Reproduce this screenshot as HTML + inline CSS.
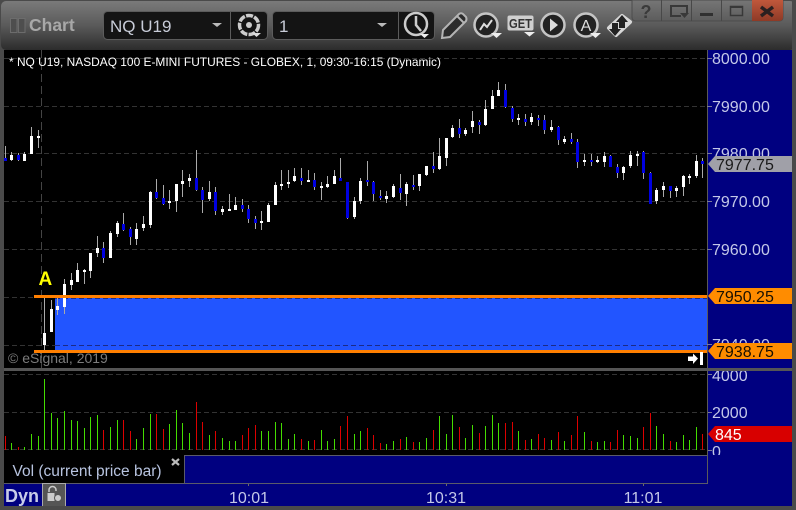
<!DOCTYPE html>
<html><head><meta charset="utf-8"><title>Chart</title>
<style>
html,body{margin:0;padding:0;background:#444}
svg{display:block}
text{font-family:"Liberation Sans",sans-serif}
</style></head><body>
<svg width="796" height="510" viewBox="0 0 796 510" xmlns="http://www.w3.org/2000/svg">
<defs>
<linearGradient id="tb" x1="0" y1="0" x2="0" y2="1"><stop offset="0" stop-color="#7a7a7a"/><stop offset=".5" stop-color="#5a5a5a"/><stop offset="1" stop-color="#2c2c2c"/></linearGradient>
<linearGradient id="btn" x1="0" y1="0" x2="0" y2="1"><stop offset="0" stop-color="#767676"/><stop offset="1" stop-color="#5c5c5c"/></linearGradient>
<linearGradient id="cl" x1="0" y1="0" x2="0" y2="1"><stop offset="0" stop-color="#c0583c"/><stop offset="1" stop-color="#8e3a26"/></linearGradient>
</defs>
<rect width="796" height="510" fill="#4a4a4a"/>
<rect x="1" y="1" width="794" height="49" rx="5" fill="url(#tb)"/>
<!-- title -->
<rect x="10.5" y="18.5" width="6.500" height="14" fill="#4e4e4e" stroke="#6c6c6c"/><rect x="18.5" y="18.5" width="6.500" height="14" fill="#4e4e4e" stroke="#6c6c6c"/>
<text x="29" y="31" font-size="17.5" font-weight="bold" fill="#a8a8a8">Chart</text>
<!-- combo 1 -->
<rect x="103.5" y="11.5" width="164" height="28" rx="4" fill="#141414" stroke="#5c5c5c"/>
<path d="M230.5 11V39" stroke="#5c5c5c"/>
<text x="110" y="32" font-size="17" fill="#c8ccd8">NQ U19</text>
<path d="M212 23h10l-5 4z" fill="#bbb"/>
<circle cx="249" cy="25" r="9.500" fill="none" stroke="#ccc" stroke-width="3.500" stroke-dasharray="7 1.300"/><circle cx="249" cy="25" r="3" fill="#ccc"/>
<path d="M252 33h9l-4.500 4z" fill="#ddd"/>
<!-- combo 2 -->
<rect x="272.500" y="11.500" width="162" height="28" rx="4" fill="#141414" stroke="#5c5c5c"/>
<path d="M398.500 11V39" stroke="#5c5c5c"/>
<text x="279" y="32" font-size="17" fill="#c8ccd8">1</text>
<path d="M377 23h10l-5 4z" fill="#bbb"/>
<circle cx="416" cy="24" r="11" fill="none" stroke="#ccc" stroke-width="2.500"/><path d="M416 16v9l5 6" fill="none" stroke="#ccc" stroke-width="2.500"/>
<path d="M420 34h9l-4.500 4z" fill="#eee"/>
<!-- tools -->
<path d="M443 30l16-16q2-1.500 4 0l3 3q1 2 0 4l-16 16-8 1z" fill="#2c2c2c" stroke="#b4b4b4" stroke-width="2"/><path d="M457 16l7 7" stroke="#b4b4b4" stroke-width="2"/>
<circle cx="486" cy="25" r="11.500" fill="#222" stroke="#c4c4c4" stroke-width="2.500"/><path d="M480 30l4-6 3 3 5-7" fill="none" stroke="#ddd" stroke-width="2"/>
<path d="M491 33h11l-5.500 5z" fill="#eee"/>
<rect x="507.500" y="15.500" width="26" height="15" rx="2" fill="#cfcfcf"/>
<text x="509" y="28" font-size="13" font-weight="bold" fill="#333" textLength="23" lengthAdjust="spacingAndGlyphs">GET</text>
<path d="M524 32h11l-5.500 4.500z" fill="#eee"/>
<circle cx="553" cy="25" r="11.500" fill="#222" stroke="#c4c4c4" stroke-width="2.500"/><path d="M550 18.500l8 6.500-8 6.500z" fill="#ddd"/>
<circle cx="586" cy="25" r="11.500" fill="#222" stroke="#c4c4c4" stroke-width="2.500"/>
<text x="586" y="31" text-anchor="middle" font-size="16" fill="#ddd">A</text>
<path d="M590 33h11l-5.500 5z" fill="#eee"/>
<path d="M609 28l13-12 8 6-14 13z" fill="#d8d8d8" stroke="#d8d8d8" stroke-width="4" stroke-linejoin="round"/>
<path d="M622 15l6 7h-3v6h-6v-6h-3z" fill="#222"/><path d="M615 36l-6-7h3v-6h6v6h3z" fill="#222"/>
<!-- window buttons -->
<path d="M632 0h151v17q0 4-4 4h-143q-4 0-4-4z" fill="url(#btn)" stroke="#4c4c4c"/>
<path d="M661.500 0v21M691.500 0v21M721.500 0v21" stroke="#484848"/>
<path d="M752 0h31v17q0 4-4 4h-27z" fill="url(#cl)"/>
<text x="646" y="18" text-anchor="middle" font-size="18" font-weight="bold" fill="#3a3a3a">?</text>
<path d="M681 16h-10V6h16v7" fill="none" stroke="#383838" stroke-width="2"/><path d="M680 13h9l-4.500 5z" fill="#383838"/>
<rect x="700" y="13" width="13" height="3" fill="#303030"/>
<rect x="730.500" y="6.500" width="12" height="9" fill="none" stroke="#383838" stroke-width="1.500"/><rect x="730" y="6" width="13" height="2" fill="#383838"/>
<path d="M761 7l12 9M773 7l-12 9" stroke="#2a2020" stroke-width="3.500"/>
<!-- chart bg -->
<rect x="4" y="50" width="703" height="318" fill="#000"/>
<rect x="707" y="50" width="85" height="456" fill="#000080"/>
<rect x="707" y="50" width="1" height="433" fill="#5a5a5a"/>
<!-- zone -->
<rect x="55" y="298" width="652" height="52" fill="#2255ff"/>
<!-- grid -->
<path d="M4 58.500H707M4 106.500H707M4 153.500H707M4 201.500H707M4 249.500H707M4 297.500H55M4 345.500H55" stroke="#333" stroke-dasharray="5 3" fill="none"/>
<path d="M55 298.500H707M55 345.500H707" stroke="#1a2a88" stroke-dasharray="5 3" fill="none"/>
<path d="M41.500 50V368" stroke="#444" stroke-dasharray="8 4" fill="none"/>
<path d="M707 58.500h5M707 106.500h5M707 153.500h5M707 201.500h5M707 249.500h5M707 344.500h5M707 374.500h5M707 412.500h5M707 450.500h5" stroke="#7a7a9a"/>
<!-- wicks -->
<path stroke="#aaa" fill="none" d="M5.500 146V160M11.500 152V161M18.500 153V161M24.500 152V161M31.500 127V154M38.500 130V148M44.500 296V350M51.500 300V332M57.500 297V315M64.500 279V314M71.500 273V290M77.500 263V282M84.500 269V284M90.500 253V278M97.500 236V257M103.500 242V263M110.500 231V258M117.500 221V237M123.500 213V231M130.500 227V245M136.500 223V245M143.500 216V231M150.500 191V228M156.500 179V199M163.500 185V205M169.500 190V209M176.500 184V212M182.500 170V197M189.500 174V187M196.500 150V191M202.500 187V213M209.500 181V201M215.500 187V215M222.500 206V215M229.500 194V211M235.500 197V210M242.500 199V212M248.500 205V223M255.500 216V229M261.500 211V230M268.500 203V222M275.500 182V205M281.500 170V190M288.500 170V188M294.500 168V182M301.500 168V185M308.500 170V182M314.500 173V190M321.500 182V200M327.500 176V188M334.500 170V184M340.500 158V181M347.500 182V219M354.500 197V219M360.500 178V204M367.500 161V186M373.500 181V201M380.500 190V200M386.500 191V203M393.500 184V198M400.500 174V200M406.500 182V206M413.500 175V190M419.500 174V191M426.500 166V176M433.500 152V173M439.500 138V170M446.500 138V166M452.500 125V138M459.500 119V138M465.500 128V136M472.500 111V133M479.500 120V134M485.500 100V126M492.500 90V109M498.500 82V96M505.500 84V108M512.500 106V122M518.500 114V125M525.500 114V126M531.500 113V125M538.500 115V126M544.500 115V134M551.500 120V132M558.500 126V145M564.500 136V144M571.500 133V144M577.500 139V168M584.500 154V166M591.500 154V166M597.500 156V163M604.500 152V167M610.500 155V167M617.500 164V178M623.500 166V180M630.500 151V168M637.500 151V166M643.500 151V179M650.500 172V204M656.500 188V204M663.500 182V197M670.500 186V198M676.500 186V197M683.500 175V196M689.500 174V184M696.500 155V178M702.500 158V178"/>
<!-- white bodies -->
<path stroke="#fff" stroke-width="3" fill="none" d="M11.500 155V160M24.500 154V161M31.500 136V154M38.500 136V138M44.500 333V345M51.500 309V332M57.500 306V310M64.500 284V307M71.500 280V285M77.500 270V282M84.500 270V272M90.500 253V271M97.500 248V253M110.500 233V258M117.500 223V234M136.500 229V239M143.500 224V228M150.500 192V225M169.500 201V203M176.500 184V201M182.500 181V184M189.500 178V181M209.500 192V199M222.500 209V212M229.500 209V211M235.500 205V210M261.500 221V223M268.500 205V222M275.500 185V205M281.500 184V186M288.500 182V184M294.500 176V181M308.500 180V182M321.500 186V188M327.500 184V187M334.500 176V184M354.500 201V217M360.500 181V201M386.500 196V199M393.500 186V197M406.500 184V194M419.500 174V186M426.500 166V175M439.500 156V169M446.500 138V158M452.500 128V137M465.500 130V134M472.500 121V127M485.500 109V125M492.500 96V109M498.500 90V96M518.500 118V120M531.500 117V122M551.500 127V130M564.500 139V142M584.500 160V162M597.500 160V162M604.500 156V162M623.500 167V173M630.500 155V166M637.500 154V156M656.500 190V201M663.500 186V190M676.500 188V191M683.500 176V187M689.500 176V178M696.500 161V176"/>
<!-- blue bodies -->
<path stroke="#0000e0" stroke-width="3" fill="none" d="M5.500 158V161M18.500 155V160M103.500 248V258M123.500 224V230M130.500 229V237M156.500 192V198M163.500 198V204M196.500 178V190M202.500 190V200M215.500 192V211M242.500 205V209M248.500 209V219M255.500 219V223M301.500 178V181M314.500 180V187M340.500 178V181M347.500 182V218M367.500 180V182M373.500 182V194M380.500 196V198M400.500 188V193M413.500 185V187M433.500 166V169M459.500 128V134M479.500 122V125M505.500 90V107M512.500 108V119M525.500 119V122M538.500 118V120M544.500 120V130M558.500 127V140M571.500 139V142M577.500 142V162M591.500 160V162M610.500 156V167M617.500 167V173M643.500 152V173M650.500 173V204M670.500 186V191M702.500 161V164"/>
<!-- orange lines -->
<rect x="34" y="295" width="673" height="3" fill="#ff7f00"/>
<rect x="34" y="350" width="673" height="3" fill="#ff7f00"/>
<text x="38.500" y="285" font-size="19" font-weight="bold" fill="#ffff00">A</text>
<text x="9" y="66" font-size="12" fill="#fff" textLength="432" lengthAdjust="spacingAndGlyphs">* NQ U19, NASDAQ 100 E-MINI FUTURES - GLOBEX, 1, 09:30-16:15 (Dynamic)</text>
<text x="8" y="363" font-size="14" fill="#7c7c7c">© eSignal, 2019</text>
<path d="M698 358.500l-5-5v3h-5v4.500h5v3z" fill="#fff"/><rect x="700" y="352" width="3" height="13" fill="#fff"/>
<!-- price labels -->
<g font-size="16" fill="#c4c8e8">
<text x="712" y="64">8000.00</text><text x="712" y="112">7990.00</text><text x="712" y="159">7980.00</text><text x="712" y="207">7970.00</text><text x="712" y="255">7960.00</text><text x="712" y="350">7940.00</text>
</g>
<path d="M708 164l7-8h77v16h-77z" fill="#a0a0a8"/><text x="716" y="170" font-size="16" fill="#1a1a1a">7977.75</text>
<path d="M708 296l7-8h77v16h-77z" fill="#ff8c00"/><text x="716" y="302" font-size="16" fill="#1a1000">7950.25</text>
<path d="M708 351l7-8h77v16h-77z" fill="#ff8c00"/><text x="716" y="357" font-size="16" fill="#1a1000">7938.75</text>
<!-- volume pane -->
<rect x="4" y="371" width="703" height="84" fill="#000"/>
<path d="M4 374.500H707M4 412.500H707M4 449.500H707" stroke="#333" stroke-dasharray="5 3" fill="none"/>
<path stroke="#44dd00" fill="none" d="M11.500 443V450M24.500 447V450M31.500 434V450M38.500 436V450M44.500 379V450M51.500 413V450M57.500 418V450M64.500 411V450M71.500 420V450M77.500 421V450M84.500 428V450M90.500 417V450M97.500 415V450M110.500 427V450M117.500 420V450M136.500 439V450M143.500 428V450M150.500 414V450M169.500 424V450M176.500 410V450M182.500 423V450M189.500 433V450M209.500 435V450M222.500 438V450M229.500 441V450M235.500 441V450M261.500 431V450M268.500 431V450M275.500 422V450M281.500 423V450M288.500 439V450M294.500 434V450M308.500 441V450M321.500 430V450M327.500 441V450M334.500 439V450M354.500 434V450M360.500 431V450M386.500 444V450M393.500 441V450M406.500 437V450M419.500 442V450M426.500 438V450M439.500 416V450M446.500 434V450M452.500 415V450M465.500 438V450M472.500 425V450M485.500 426V450M492.500 415V450M498.500 423V450M518.500 431V450M531.500 439V450M551.500 440V450M564.500 441V450M584.500 432V450M597.500 442V450M604.500 441V450M623.500 435V450M630.500 436V450M637.500 438V450M656.500 426V450M663.500 434V450M676.500 442V450M683.500 435V450M689.500 440V450M696.500 427V450"/>
<path stroke="#dd0000" fill="none" d="M5.500 436V450M18.500 447V450M103.500 430V450M123.500 420V450M130.500 431V450M156.500 414V450M163.500 429V450M196.500 402V450M202.500 422V450M215.500 431V450M242.500 435V450M248.500 428V450M255.500 425V450M301.500 439V450M314.500 440V450M340.500 426V450M347.500 416V450M367.500 428V450M373.500 435V450M380.500 443V450M400.500 439V450M413.500 442V450M433.500 430V450M459.500 427V450M479.500 433V450M505.500 423V450M512.500 422V450M525.500 440V450M538.500 434V450M544.500 438V450M558.500 432V450M571.500 435V450M577.500 416V450M591.500 441V450M610.500 442V450M617.500 430V450M643.500 427V450M650.500 413V450M670.500 441V450M702.500 434V450"/>
<g font-size="16" fill="#c4c8e8"><text x="712" y="381">4000</text><text x="712" y="418">2000</text></g>
<svg x="708" y="442" width="84" height="13"><text x="4" y="15" font-size="16" fill="#c4c8e8">0</text></svg>
<path d="M708 434l7-8h77v16h-77z" fill="#d80000"/><text x="715" y="440" font-size="16" fill="#fff">845</text>
<!-- separator -->
<rect x="4" y="368" width="788" height="3" fill="#555"/>
<!-- legend -->
<rect x="4" y="455" width="703" height="28" fill="#000"/>
<rect x="185" y="456" width="522" height="27" fill="#000080"/>
<path d="M184.500 455V483M184 455.500H707" stroke="#5a5a6a" fill="none"/>
<rect x="707" y="371" width="1" height="113" fill="#5a5a5a"/>
<text x="12.500" y="476" font-size="15.500" fill="#b8c4e0">Vol (current price bar)</text>
<path d="M172 459l7 6M179 459l-7 6" stroke="#bbb" stroke-width="2.200"/>
<!-- time axis -->
<rect x="4" y="484" width="788" height="22" fill="#000080"/>
<rect x="4" y="483" width="704" height="1" fill="#5a5a6a"/>
<path d="M248.500 484v2M446.500 484v2M643.500 484v2" stroke="#6a6a6a"/>
<g font-size="16" fill="#c4c8e8" text-anchor="middle"><text x="249" y="503">10:01</text><text x="446" y="503">10:31</text><text x="643" y="503">11:01</text></g>
<text x="5" y="502" font-size="18" font-weight="bold" fill="#c8cce8">Dyn</text>
<rect x="42.500" y="483.500" width="23" height="23" fill="#555" stroke="#aaa"/>
<path d="M49 492v-2a3.500 3.500 0 0 1 7 0v1" fill="none" stroke="#ccc" stroke-width="1.500"/><rect x="47.500" y="493" width="7" height="8" fill="#ccc"/><circle cx="58" cy="498" r="3.500" fill="#ccc" stroke="#555"/>
<rect x="792" y="0" width="4" height="510" fill="#4a4a4a"/>
<rect x="0" y="506" width="796" height="4" fill="#4a4a4a"/>
<rect x="0" y="50" width="4" height="460" fill="#4a4a4a"/>
</svg>
</body></html>
